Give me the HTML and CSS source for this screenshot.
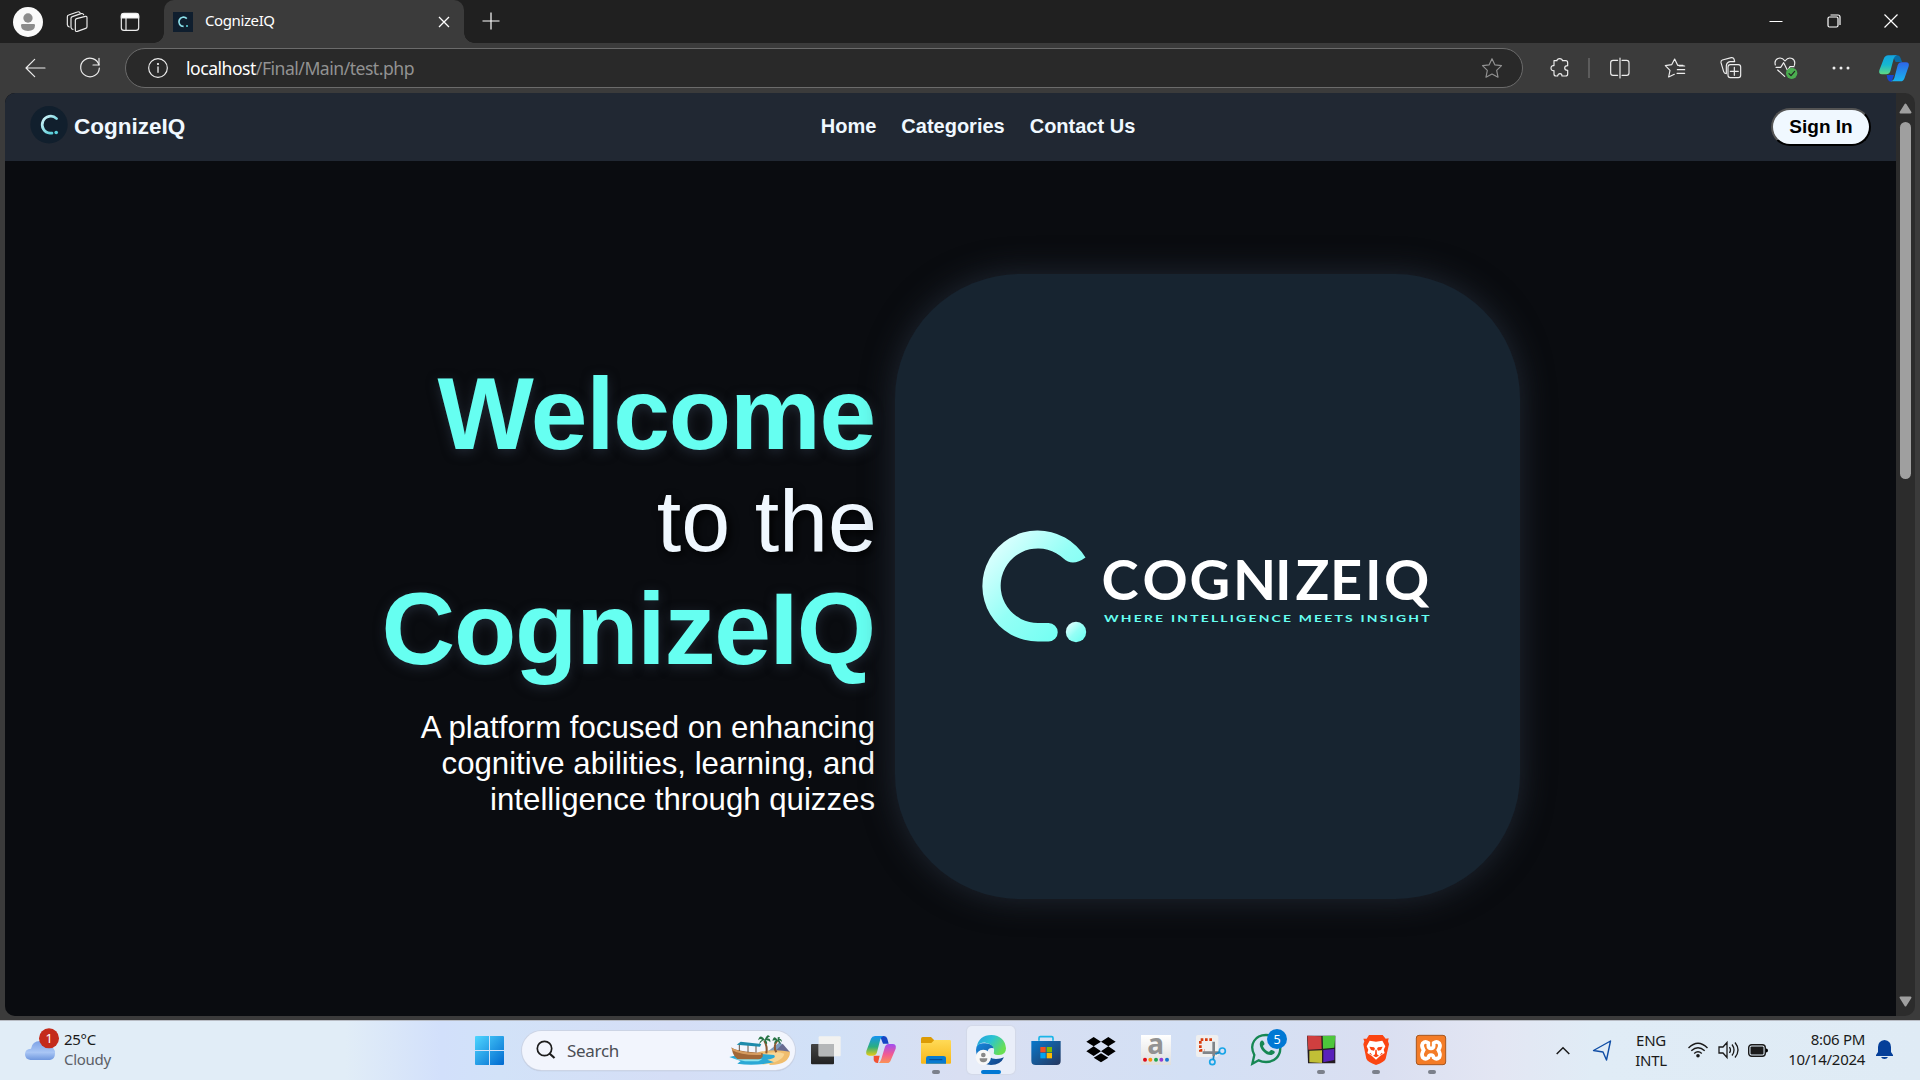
FILE: index.html
```html
<!DOCTYPE html>
<html lang="en">
<head>
<meta charset="utf-8">
<title>CognizeIQ</title>
<link rel="stylesheet" href="styles.css">
</head>
<body>
<div class="screen">

<header class="titlebar">
  <div class="slot slot-avatar"><svg width="30" height="30" viewBox="0 0 90 90"><circle cx="45" cy="45" r="45" fill="#fafafa"/><circle cx="45" cy="33" r="14" fill="#8c8c8c"/><path d="M24 55q0-4 4-4h34q4 0 4 4 0 17-21 17T24 55z" fill="#8c8c8c"/></svg></div>
  <div class="slot slot-spaces"><svg width="22" height="22" viewBox="0 0 66 66" class="line"><path d="M32 23l26-7q5-1 5 4v27q0 4-4 5l-25 9q-6 2-6-4V28q0-4 4-5z"/><path d="M21 55q-5 0-6-6V22q0-4 4-5l26-9q6-2 8 3"/><path d="M10 48q-5-1-6-7V17q0-4 4-5l26-9q5-2 8 2"/></svg></div>
  <div class="slot slot-tabs"><svg width="20" height="20" viewBox="0 0 60 60" class="line"><rect x="4" y="5" width="52" height="50" rx="8"/><path d="M4 18V12q0-8 8-8h36q8 0 8 8v6z" fill="#fff"/><path d="M18 18v36"/></svg></div>
  <div class="tab">
    <svg class="favicon" width="20" height="20" viewBox="0 0 20 20"><rect width="20" height="20" fill="#0f1e2e"/><path d="M13.8 6.6A4.6 4.6 0 1 0 10.6 14.4" fill="none" stroke="#8ce0ea" stroke-width="1.7"/><circle cx="14" cy="14" r="1" fill="#5fd9df"/></svg>
    <span class="tab-title">CognizeIQ</span>
    <svg class="tab-close" width="12" height="12" viewBox="0 0 12 12"><path d="M1 1l10 10M11 1L1 11" stroke="#fff" stroke-width="1.3"/></svg>
  </div>
  <div class="slot slot-plus"><svg width="18" height="18" viewBox="0 0 18 18"><path d="M9 .5v17M.5 9h17" stroke="#fff" stroke-width="1.2"/></svg></div>
  <div class="window-controls">
    <svg width="14" height="14" viewBox="0 0 14 14"><path d="M.5 7.5h13" stroke="#fff"/></svg>
    <svg width="14" height="14" viewBox="0 0 14 14" class="thin"><rect x="1" y="3" width="10" height="10" rx="1.5"/><path d="M3.5 1H11q2 0 2 2v8"/></svg>
    <svg width="14" height="14" viewBox="0 0 14 14" class="thin"><path d="M.5.5l13 13M13.5.5l-13 13"/></svg>
  </div>
</header>

<div class="toolbar">
  <div class="slot slot-back"><svg width="20" height="18" viewBox="0 0 60 54" class="line"><path d="M60 27H3M29 1L3 27l26 26"/></svg></div>
  <div class="slot slot-reload"><svg width="22" height="22" viewBox="0 0 66 66" class="line"><path d="M60 24A28 28 0 1 0 61 33"/><path d="M60 4v20H42"/></svg></div>
  <div class="omnibox">
    <svg width="20" height="20" viewBox="0 0 60 60" class="line"><circle cx="30" cy="30" r="28"/><path d="M30 27v16" stroke-width="4"/><circle cx="30" cy="18" r="1.6" fill="#fff"/></svg>
    <span class="url"><b>localhost</b>/Final/Main/test.php</span>
    <svg width="20" height="20" viewBox="0 0 60 60" class="line dim"><path d="M30 2l8.500 18.500 20 2.500-14.500 14 4 20.500L30 48 12 57.500l4-20.500L1.500 23l20-2.500z"/></svg>
  </div>
  <div class="tools">
    <div class="slot"><svg width="20" height="20" viewBox="0 0 60 60" class="line"><path d="M12 8h9c-2-8 18-8 16 0h10q6 0 6 6v9c-4 0-9 2-9 7s5 7 9 7v11q0 6-6 6H36c0-3-2-7-6-7s-7 4-7 7h-5q-6 0-6-6V38c-12 3-12-18 0-15z"/></svg></div>
    <div class="divider"></div>
    <div class="slot"><svg width="20" height="20" viewBox="0 0 60 60" class="line"><path d="M23 52H9q-7 0-7-7V14q0-7 7-7h14M36 7h14q7 0 7 7v31q0 7-7 7H36M30 0v60"/></svg></div>
    <div class="slot"><svg width="20" height="20" viewBox="0 0 60 60" class="line"><path d="M54 22H38L29 3l-9 17-19 3 14 14-4 20 17-8M37 35h22M36 46h23M43 24h16"/></svg></div>
    <div class="slot"><svg width="22" height="22" viewBox="0 0 66 66" class="line"><rect x="24" y="23" width="38" height="39" rx="7"/><path d="M43 31v24M31 43h24M19 50c-5 0-7-2-8-6L3 17q-1-6 4-8l27-7q6-1 8 4l2 8H30q-10 2-11 12z"/></svg></div>
    <div class="slot"><svg width="24" height="24" viewBox="0 0 72 72" class="line"><path d="M6 34h14l9-14 12 24 7-12h12M4 27C-1 8 20-2 33 15 46-2 67 8 61 28M11 42l21 19"/><circle cx="53" cy="52" r="17" fill="#4bad50" stroke="none"/><path d="M45 53l6 6 11-13" stroke="#222"/></svg></div>
    <div class="slot"><svg width="18" height="6" viewBox="0 0 54 18" fill="#eee"><circle cx="6" cy="9" r="4.500"/><circle cx="27" cy="9" r="4.500"/><circle cx="48" cy="9" r="4.500"/></svg></div>
    <div class="slot slot-copilot"><svg width="30" height="27" viewBox="0 0 90 81">
      <defs>
        <linearGradient id="ca" x1="0" y1="0" x2="0" y2="1"><stop offset="0" stop-color="#13a4e0"/><stop offset=".5" stop-color="#16b8d0"/><stop offset="1" stop-color="#61d982"/></linearGradient>
        <linearGradient id="cb" x1="0" y1="0" x2="0" y2="1"><stop offset="0" stop-color="#2e66e8"/><stop offset="1" stop-color="#18b5ee"/></linearGradient>
      </defs>
      <path d="M40 1h14q8 0 11 9l4 11H50z" fill="#096ba5"/><path d="M14 12Q18 1 28 1h26q-8 2-10 10L34 49q-3 9-12 9H9Q-2 58 1 46z" fill="url(#ca)"/><path d="M23 60h22L38 80q-10 1-13-10z" fill="#1746d0"/><path d="M77 68q-3 11-13 11H36q8-2 10-10l10-38q3-9 11-9h14q11 0 8 12z" fill="url(#cb)"/></svg></div>
  </div>
</div>

<main class="viewport">
  <div class="page">
    <nav class="nav">
      <div class="brand"><svg width="38" height="38" viewBox="0 0 38 38"><circle cx="19" cy="18.700" r="18.700" fill="#111f2d"/><path d="M26.600 12.600A8.500 8.500 0 1 0 20 27.200h2" fill="none" stroke="url(#mini)" stroke-width="2.700" stroke-linecap="round"/><circle cx="26.200" cy="26.500" r="1.800" fill="#5bd3dd"/><defs><linearGradient id="mini" x1="0" y1="0" x2="1" y2="1"><stop offset="0" stop-color="#d7f5fa"/><stop offset="1" stop-color="#43c7d3"/></linearGradient></defs></svg><span>CognizeIQ</span></div>
      <div class="links"><a>Home</a><a>Categories</a><a>Contact Us</a></div>
      <button class="signin">Sign In</button>
    </nav>
    <section class="hero">
      <div class="intro">
        <h1><span class="big">Welcome</span><span class="mid">to the</span><span class="big low">CognizeIQ</span></h1>
        <p>A platform focused on enhancing<br>cognitive abilities, learning, and<br>intelligence through quizzes</p>
      </div>
      <div class="card">
        <svg width="450" height="114" viewBox="0 0 450 114">
          <defs><linearGradient id="lg" x1="0" y1="0" x2="1" y2="1"><stop offset=".1" stop-color="#e2ffff"/><stop offset=".5" stop-color="#94fff6"/><stop offset="1" stop-color="#66fff1"/></linearGradient></defs>
          <path d="M103.500 28.500A55.500 55.500 0 1 0 56.500 112.500h10a9.200 9.200 0 0 0 0-18.500H56.500A37.300 37.300 0 1 1 81.500 29.500q9 8.500 22-1z" fill="url(#lg)"/>
          <circle cx="94" cy="103" r="10.200" fill="url(#lg)"/>
          <text class="wordmark" y="70.500" x="119.500 160.500 207.500 251 293 313.500 348 383 402">COGNIZEIQ</text>
          <text class="tagline" transform="translate(122 93) scale(1.550 1)" textLength="210" lengthAdjust="spacing">WHERE INTELLIGENCE MEETS INSIGHT</text>
        </svg>
      </div>
    </section>
  </div>
  <div class="scrollbar">
    <svg width="13" height="11" viewBox="0 0 13 11"><path d="M6.500 1.500l5 8h-10z" fill="#9f9f9f" stroke="#9f9f9f" stroke-linejoin="round" stroke-width="2"/></svg>
    <div class="thumb"></div>
    <svg width="13" height="11" viewBox="0 0 13 11"><path d="M6.500 9.500l5-8h-10z" fill="#9f9f9f" stroke="#9f9f9f" stroke-linejoin="round" stroke-width="2"/></svg>
  </div>
</main>

<footer class="taskbar">
  <div class="weather">
    <svg width="36" height="34" viewBox="0 0 108 102"><defs><linearGradient id="cl" x1="0" y1="0" x2="0" y2="1"><stop offset="0" stop-color="#7da2e6"/><stop offset=".6" stop-color="#a9c6f5"/><stop offset="1" stop-color="#6f97de"/></linearGradient></defs><path d="M16 96q-16-2-16-17 0-16 18-17 4-23 27-23 20 0 27 17 18 0 18 20 0 18-15 20z" fill="url(#cl)"/><circle cx="72" cy="31" r="30" fill="#c42b1c"/><text x="72" y="45" class="badge">1</text></svg>
    <div class="weather-text"><span>25°C</span><span class="muted">Cloudy</span></div>
  </div>
  <svg class="start" width="29" height="29" viewBox="0 0 29 29"><defs><linearGradient id="wn" gradientUnits="userSpaceOnUse" x1="0" y1="0" x2="29" y2="29"><stop offset="0" stop-color="#4fd6ff"/><stop offset="1" stop-color="#0069cf"/></linearGradient></defs><path d="M1 0h13v14H0V1q0-1 1-1zM15 0h13q1 0 1 1v13H15zM0 15h14v14H1q-1 0-1-1zM15 15h14v13q0 1-1 1H15z" fill="url(#wn)"/></svg>
  <div class="search">
    <svg width="20" height="20" viewBox="0 0 20 20" fill="none" stroke="#1c1c1c"><circle cx="8.500" cy="8.500" r="7.200" stroke-width="1.700"/><path d="M13.500 13.500l5 4.500" stroke-width="2.200"/></svg>
    <span>Search</span>
    <svg width="63" height="32" viewBox="0 0 189 96">
      <path d="M120 52l36-28 28 31z" fill="#7d99bd"/><path d="M140 53l24-24 22 26z" fill="#686b92"/>
      <path d="M90 55q50-12 96-2 0 38-60 40z" fill="#f0bd6d"/><path d="M105 60q40-10 64-1-6 26-65 33z" fill="#f8d695"/>
      <path d="M4 69q60-16 134-6 10 10-20 14l20 8q-60 12-110 4l10-8z" fill="#2ba8d5"/><path d="M18 74l85 2-12 6-40 0z" fill="#8ee4ee"/>
      <path d="M10 40q12 13 94 17v11q-6 8-14 8H35Q17 76 10 40z" fill="#a16737"/><path d="M12 43q28 14 88 14l-1 6q-60 2-86-14z" fill="#d69c60"/>
      <path d="M34 29v22M60 31v24M84 34v21" stroke="#654" stroke-width="3"/><path d="M26 32l12-9 62 7-4 8z" fill="#1e8bab"/>
      <path d="M109 20q10 18 6 38M148 20q-14 17-3 35" stroke="#8b5a35" stroke-width="6" fill="none"/>
      <path d="M110 17q-14-20-20 2 8-7 12-2-9 5-8 14 9-13 15-12 1 10 8 12 2-8-4-12 9-2 14 6 1-15-9-11 5-9 9-4-8-16-17 7zM149 18q-11-18-16 2l10-2q-5 6-5 13l11-11q3 8 9 11 0-7-5-12 7 0 9 6 0-10-8-11 5-8-5-4z" fill="#287446"/>
    </svg>
  </div>
  <div class="apps">
    <div class="app"><svg width="30" height="30" viewBox="0 0 90 90"><defs><linearGradient id="tv" x2="0" y2="1"><stop stop-color="#444"/><stop offset="1" stop-color="#222"/></linearGradient></defs><rect y="27" width="69" height="61" rx="3" fill="url(#tv)"/><rect x="23" y="4" width="66" height="60" rx="3" fill="#f2f2f0"/><path d="M23 27h46v37H23z" fill="#b5b7b8"/></svg></div>
    <div class="app"><svg width="30" height="30" viewBox="0 0 90 90"><defs><linearGradient id="c1" x2="0" y2="1"><stop stop-color="#1593f1"/><stop offset=".55" stop-color="#2aae80"/><stop offset="1" stop-color="#e7cc12"/></linearGradient><linearGradient id="c2" x2="0" y2="1"><stop stop-color="#a04ef2"/><stop offset=".55" stop-color="#f25b91"/><stop offset="1" stop-color="#fa9355"/></linearGradient></defs><path d="M42 3h12q8 0 10 8l4 15H51z" fill="#1546c5"/><path d="M15 11Q18 3 27 3h26q-7 1-10 10L33 52q-3 10-12 10H10Q-2 62 1 48z" fill="url(#c1)"/><path d="M23 62h18l-5 22q-10 1-13-9z" fill="#f25132"/><path d="M75 74q-3 10-12 10H37q6-2 9-12l10-34q3-11 12-11h12q12 0 9 14z" fill="url(#c2)"/></svg></div>
    <div class="app open"><svg width="30" height="30" viewBox="0 0 90 90"><defs><linearGradient id="fo" x2="0" y2="1"><stop stop-color="#ffda57"/><stop offset="1" stop-color="#f7b718"/></linearGradient></defs><path d="M0 25V11q0-5 5-5h25l9 9v10z" fill="#dc9b05"/><path d="M0 24h31l9-9h46q4 0 4 4v64q0 3-3 3H3q-3 0-3-3z" fill="url(#fo)"/><path d="M15 86V70q0-7 7-7h45q8 0 8 7v16z" fill="#087bd0"/><path d="M25 74h39" stroke="#06478c" stroke-width="3"/></svg></div>
    <div class="app active"><svg width="30" height="30" viewBox="0 0 90 90"><defs><linearGradient id="e1" x2="1" y2=".5"><stop stop-color="#249ee0"/><stop offset=".5" stop-color="#2bc3d2"/><stop offset="1" stop-color="#69df52"/></linearGradient><linearGradient id="e2" x2="1" y2="1"><stop stop-color="#1789dd"/><stop offset="1" stop-color="#123f83"/></linearGradient></defs><path d="M0 45Q0 21 28 25 50 27 54 40 36 36 34 52 36 72 60 72q14 0 24-5-10 23-39 23Q2 88 0 45z" fill="url(#e2)"/><path d="M2 36Q9 0 46 0q40 2 44 40 0 22-25 20-15-1-11-9Q57 28 29 23 12 21 2 36z" fill="url(#e1)"/><circle cx="22" cy="67" r="23" fill="#f8f8f8"/><circle cx="22" cy="60" r="7" fill="#888"/><path d="M11 70h23q0 12-12 12t-11-12z" fill="#888"/></svg></div>
    <div class="app"><svg width="30" height="30" viewBox="0 0 90 90"><defs><linearGradient id="st" x2="1" y2="1"><stop stop-color="#0878cc"/><stop offset="1" stop-color="#26375e"/></linearGradient></defs><path d="M24 17V9q0-4 4-4h34q4 0 4 4v8" fill="none" stroke="#1bb5e8" stroke-width="5"/><path d="M1 18h88v60q0 12-12 12H14Q1 90 1 77z" fill="url(#st)"/><path d="M28 36h16v16H28z" fill="#f25022"/><path d="M47 36h16v16H47z" fill="#7fba00"/><path d="M28 54h16v16H28z" fill="#00a4ef"/><path d="M47 54h16v16H47z" fill="#ffb900"/></svg></div>
    <div class="app"><svg width="30" height="30" viewBox="0 0 90 90"><path d="M23 6l22 14-22 14L1 20zM67 6l22 14-22 14-22-14zM23 34l22 15-22 14L1 49zM67 34l22 15-22 14-22-14zM45 55l22 13-22 14-22-14z"/></svg></div>
    <div class="app"><svg width="30" height="30" viewBox="0 0 90 90"><defs><linearGradient id="am" x2="0" y2="1"><stop stop-color="#fff"/><stop offset="1" stop-color="#dedede"/></linearGradient></defs><path fill="url(#am)" d="M0 0h90v90H0z"/><text x="44" y="57" class="letter-a">a</text><circle cx="12" cy="74" r="6" fill="#e10b18"/><circle cx="28" cy="74" r="6" fill="#fb9410"/><circle cx="45" cy="74" r="6" fill="#20a54b"/><circle cx="61" cy="74" r="6" fill="#923ad4"/><circle cx="78" cy="74" r="6" fill="#1676d2"/></svg></div>
    <div class="app"><svg width="30" height="30" viewBox="0 0 90 90"><rect width="67" height="66" rx="6" fill="#efefef"/><path d="M48 14H13v32h12" fill="none" stroke="#d93b0b" stroke-width="8" stroke-dasharray="8 5"/><path d="M53 20v44M20 53h50" stroke="#808489" stroke-width="8"/><circle cx="79" cy="48" r="9" fill="none" stroke="#19a5e7" stroke-width="5"/><circle cx="49" cy="81" r="8" fill="none" stroke="#19a5e7" stroke-width="5"/><path d="M58 58l13-7M53 63l-1 11" stroke="#1687c4" stroke-width="5"/></svg></div>
    <div class="app"><svg class="whatsapp" width="36" height="36" viewBox="0 0 108 108"><path d="M4 104l6-26C-7 46 13 18 45 18c58 1 56 81 0 81-9 0-16-2-22-5z" fill="none" stroke="#168753" stroke-width="7"/><path d="M28 38c5-6 9-4 12 5 2 5-5 5-4 9 3 8 9 13 16 16 5 2 5-7 10-5 9 3 11 5 8 10C55 91 18 59 28 38z" fill="#168753"/><circle cx="78" cy="30" r="30" fill="#0078d4"/><text x="78" y="44" class="badge">5</text></svg></div>
    <div class="app open"><svg width="30" height="30" viewBox="0 0 90 90"><path d="M3 2h85v83H6z" fill="#231b20"/><path d="M4 2l42 2 1 38-40 2z" fill="#cf3f3f"/><path d="M50 3l38-1-3 36-34 3z" fill="#4dc63b"/><path d="M10 47l38-1v38l-38-2z" fill="#c1bf36"/><path d="M52 45l33-3v33l-33 7z" fill="#5921ba"/></svg></div>
    <div class="app open"><svg width="30" height="30" viewBox="0 0 90 90"><path d="M24 0h41l9 11 9-1-2 9 3 9-10 43q-2 9-29 19-25-9-29-19L7 28l3-9-3-8 10 0z" fill="#fb4512"/><path d="M26 17l19 3 19-3 9 17-5 10 3 10-13 8-13 12-13-12-13-8 3-10-5-10z" fill="#fff"/><path d="M25 35l14 2 3 4-3 6-9-2zM65 35l-14 2-3 4 3 6 9-2zM43 44h4l1 14 6 4-9 5-9-5 6-4zM28 53l6 8-9-5zM62 53l-6 8 9-5z" fill="#fb4512"/></svg></div>
    <div class="app open"><svg width="30" height="30" viewBox="0 0 90 90"><rect x="1" y="1" width="88" height="88" rx="8" fill="#f47c27" stroke="#a8571f" stroke-width="3"/><path d="M20 25q8-8 17-1v9q0 7 8 7t8-7v-9q9-7 17 1 5 9-3 20 8 12 3 22-8 8-17 1-1-8-8-8t-8 8q-9 7-17-1-5-10 3-22-8-11-3-20z" fill="none" stroke="#fff" stroke-width="11"/></svg></div>
  </div>
  <div class="tray">
    <svg class="chevron" width="14" height="9" viewBox="0 0 14 9" fill="none" stroke="#1a1a1a" stroke-width="1.500"><path d="M.7 8L7 1.700 13.300 8"/></svg>
    <svg class="locate" width="20" height="21" viewBox="0 0 20 21" fill="none" stroke="#0f4da5" stroke-width="1.400" stroke-linejoin="round"><path d="M18.500 1L1.500 10.500l9.500 1.500 3.500 8z"/></svg>
    <div class="lang"><span>ENG</span><span>INTL</span></div>
    <svg class="wifi" width="20" height="16" viewBox="0 0 20 16" fill="none" stroke="#1a1a1a" stroke-width="1.400"><path d="M.5 6Q10-3.500 19.500 6M3.300 8.800q6.700-6.200 13.400 0M6.200 11.500q3.800-3.300 7.600 0"/><circle cx="10" cy="13.800" r="1.800" fill="#1a1a1a" stroke="none"/></svg>
    <svg class="volume" width="21" height="18" viewBox="0 0 21 18" fill="none" stroke="#1a1a1a" stroke-width="1.300"><path d="M1 6h4l4-4.500v15L5 12H1zM11.500 6q2 3 0 6M14 3.500q4 5.500 0 11M17 1.500q6 7.500 0 15"/></svg>
    <svg class="battery" width="20" height="13" viewBox="0 0 20 13"><rect x=".7" y=".7" width="16.600" height="11.600" rx="3" fill="none" stroke="#1a1a1a" stroke-width="1.400"/><rect x="2.500" y="2.500" width="13" height="8" rx="1" fill="#1a1a1a"/><path d="M18 4.500q2 0 2 2t-2 2z"/></svg>
    <div class="clock"><span>8:06 PM</span><span>10/14/2024</span></div>
    <svg class="bell" width="17" height="20" viewBox="0 0 17 20" fill="#053f99"><path d="M8.500 0Q15 1 15 7v5l2 3v1H0v-1l2-3V7Q2 1 8.500 0zM5 17h7q-1 2-3.500 2T5 17z"/></svg>
  </div>
</footer>
</div>
</body>
</html>
```
FILE: styles.css
```css
* { box-sizing: border-box; }
body { margin: 0; background: #3b3b3b; font-family: "Noto Sans", sans-serif; }
svg { display: block; flex: none; overflow: visible; }
.screen { width: 1920px; height: 1080px; display: flex; flex-direction: column; overflow: hidden; }
.line { fill: none; stroke: #ededed; stroke-width: 3.5; stroke-linejoin: round; stroke-linecap: round; }
.thin { fill: none; stroke: #fff; stroke-width: 1.2; }
.dim { stroke: #919191; }
.slot { display: flex; align-items: center; justify-content: center; width: 55.3px; flex: none; }

/* Browser chrome */
.titlebar { height: 43px; background: #202020; display: flex; flex: none; }
.slot-avatar { width: 56px; }
.slot-spaces { width: 42px; }
.slot-tabs { width: 64px; }
.tab { position: relative; width: 300px; margin-left: 2px; padding: 0 14px 0 9px; display: flex; align-items: center; background: #3b3b3b; border-radius: 10px 10px 0 0; }
.tab::before, .tab::after { content: ""; position: absolute; bottom: 0; width: 10px; height: 10px; }
.tab::before { left: -10px; background: radial-gradient(circle at 0 0, transparent 9.5px, #3b3b3b 10px); }
.tab::after { right: -10px; background: radial-gradient(circle at 100% 0, transparent 9.5px, #3b3b3b 10px); }
.favicon { margin-top: 1px; }
.tab-title { flex: 1; margin: -3px 0 0 12px; color: #fff; font-size: 15px; letter-spacing: -.4px; }
.slot-plus { width: 53px; padding-bottom: 1px; }
.window-controls { margin-left: auto; display: flex; align-items: center; gap: 43.5px; padding: 0 22px 1px 0; }
.toolbar { height: 50px; display: flex; flex: none; align-items: center; background: #3b3b3b; }
.slot-back { width: 70px; }
.slot-reload { width: 40px; }
.omnibox { width: 1398px; height: 40px; margin-left: 15px; padding: 0 20px 0 22px; display: flex; align-items: center; border: 1px solid #6b6b6b; border-radius: 20px; background: #292929; }
.url { flex: 1; margin: -1px 0 0 18px; color: #929292; font-size: 17.6px; letter-spacing: -.5px; }
.url b { color: #fff; font-weight: 400; }
.tools { display: flex; align-items: center; padding-left: 9px; }
.tools .slot { height: 48px; }
.divider { width: 2px; height: 20px; margin: 0 2px 0 1px; background: #5c5c5c; }
.tools .slot-copilot { width: 50px; }

/* Web page */
.viewport { width: 1910px; height: 923px; margin: 0 0 4px 5px; display: flex; flex: none; border-radius: 10px; overflow: hidden; background: #2c2c2c; }
.page { width: 1891px; background: #0a0c10; font-family: "Liberation Sans", Arial, sans-serif; }
.nav { height: 68px; padding: 0 25px; display: grid; grid-template-columns: 1fr auto 1fr; align-items: center; background: #212833; font-weight: 700; color: #f0f8ff; }
.brand { display: flex; align-items: center; gap: 6px; font-size: 22.5px; padding-bottom: 5px; }
.brand span { padding-top: 4px; }
.links { display: flex; gap: 25px; font-size: 20px; position: relative; left: 27.5px; padding-bottom: 1px; }
.signin { justify-self: end; width: 100px; height: 38px; margin-bottom: 1px; padding: 0; border: 2px outset #000; border-radius: 19px; background: #f0f8ff; color: #000; font: 700 19px "Liberation Sans", Arial, sans-serif; }
.hero { display: flex; align-items: center; gap: 20px; padding: 113px 0 0 370px; }
.intro { width: 500px; text-align: right; color: #f0f8ff; white-space: nowrap; }
.intro h1 { margin: 2px 0 0; display: flex; flex-direction: column; font-weight: 400; }
.big { font-size: 102px; line-height: 114px; letter-spacing: -1.2px; font-weight: 700; color: #66fff1; text-shadow: 0 3px 12px #212833; }
.mid { margin-right: -2px; font-size: 88px; line-height: 100px; text-shadow: 3px 3px 8px #000; }
.low { line-height: 116px; }
.intro p { margin: 23px 0 0; font-size: 31.2px; line-height: 36px; color: #fff; }
.card { width: 625px; height: 625px; padding: 0 0 2px 87px; display: flex; align-items: center; border-radius: 125px; background: #172430; box-shadow: 0 0 32px #212833; }
.wordmark { font-family: Lato, sans-serif; font-weight: 700; font-size: 56px; fill: #fff; }
.tagline { font-family: Lato, sans-serif; font-weight: 700; font-size: 9px; fill: #66fff1; }
.scrollbar { width: 19px; padding: 10px 0 9px; display: flex; flex-direction: column; align-items: center; }
.thumb { width: 11px; height: 357px; margin: 8px 0 auto; border-radius: 6px; background: #9f9f9f; }

/* Taskbar */
.taskbar { height: 60px; flex: none; display: flex; align-items: center; border-top: 1px solid #b8bcc4; padding-bottom: 1px; color: #1a1a1a; font-size: 15px; line-height: 20px; background: linear-gradient(90deg, #e1edf7 0, #e1edf7 18%, #d2e0fb 23%, #d2e2f8 26%, #d5def6 35%, #d1e1f7 43%, #d9dff2 50%, #d3e0f5 62%, #dadff1 72%, #e3e6f3 78%, #e0ecf6 83%, #dfebf5 100%); }
.badge { fill: #fff; font: 38px "Noto Sans", sans-serif; text-anchor: middle; }
.weather { width: 450px; padding: 0 0 3px 25px; display: flex; gap: 3px; }
.weather svg { margin-top: -1px; }
.weather-text { display: flex; flex-direction: column; letter-spacing: -.3px; }
.muted { color: #5b6067; }
.start { margin-left: 25px; }
.search { width: 273px; height: 39px; margin-left: 18px; padding: 0 4px 0 14px; display: flex; align-items: center; border-radius: 20px; background: #f2f5fd; box-shadow: 0 0 0 1px #ccd4e5, 0 1px 1px #9ba9c0; font-size: 17px; letter-spacing: -.3px; color: #4b4e54; }
.search span { flex: 1; margin: 1px 0 0 11px; }
.apps { display: flex; margin-left: 3px; }
.app { position: relative; width: 55.05px; height: 48px; flex: none; display: flex; align-items: center; justify-content: center; }
.app.open::after, .app.active::after { content: ""; position: absolute; left: 24px; bottom: 0; width: 8px; height: 4px; border-radius: 2px; background: #7b808b; }
.app.active::before { content: ""; position: absolute; inset: 0 3.500px; border-radius: 5px; background: #e9eef9; box-shadow: 0 0 1px 1px #d3d9e8; }
.app.active svg { position: relative; }
.app.active::after { left: 17.500px; width: 20px; background: #0078d4; }
.whatsapp { margin: -6px -6px 0 0; }
.letter-a { font: 700 84px "Noto Sans", sans-serif; fill: #929292; text-anchor: middle; }
.tray { margin-left: auto; display: flex; align-items: center; padding-right: 27px; }
.locate { margin-left: 22px; }
.lang { width: 32px; margin: -1px 0 0 23px; display: flex; flex-direction: column; text-align: center; letter-spacing: -.3px; }
.wifi { margin-left: 21px; }
.volume { margin-left: 10px; }
.battery { margin-left: 9px; }
.clock { width: 97px; margin-top: -3px; display: flex; flex-direction: column; text-align: right; letter-spacing: -.3px; }
.bell { margin-left: 11px; }
```
